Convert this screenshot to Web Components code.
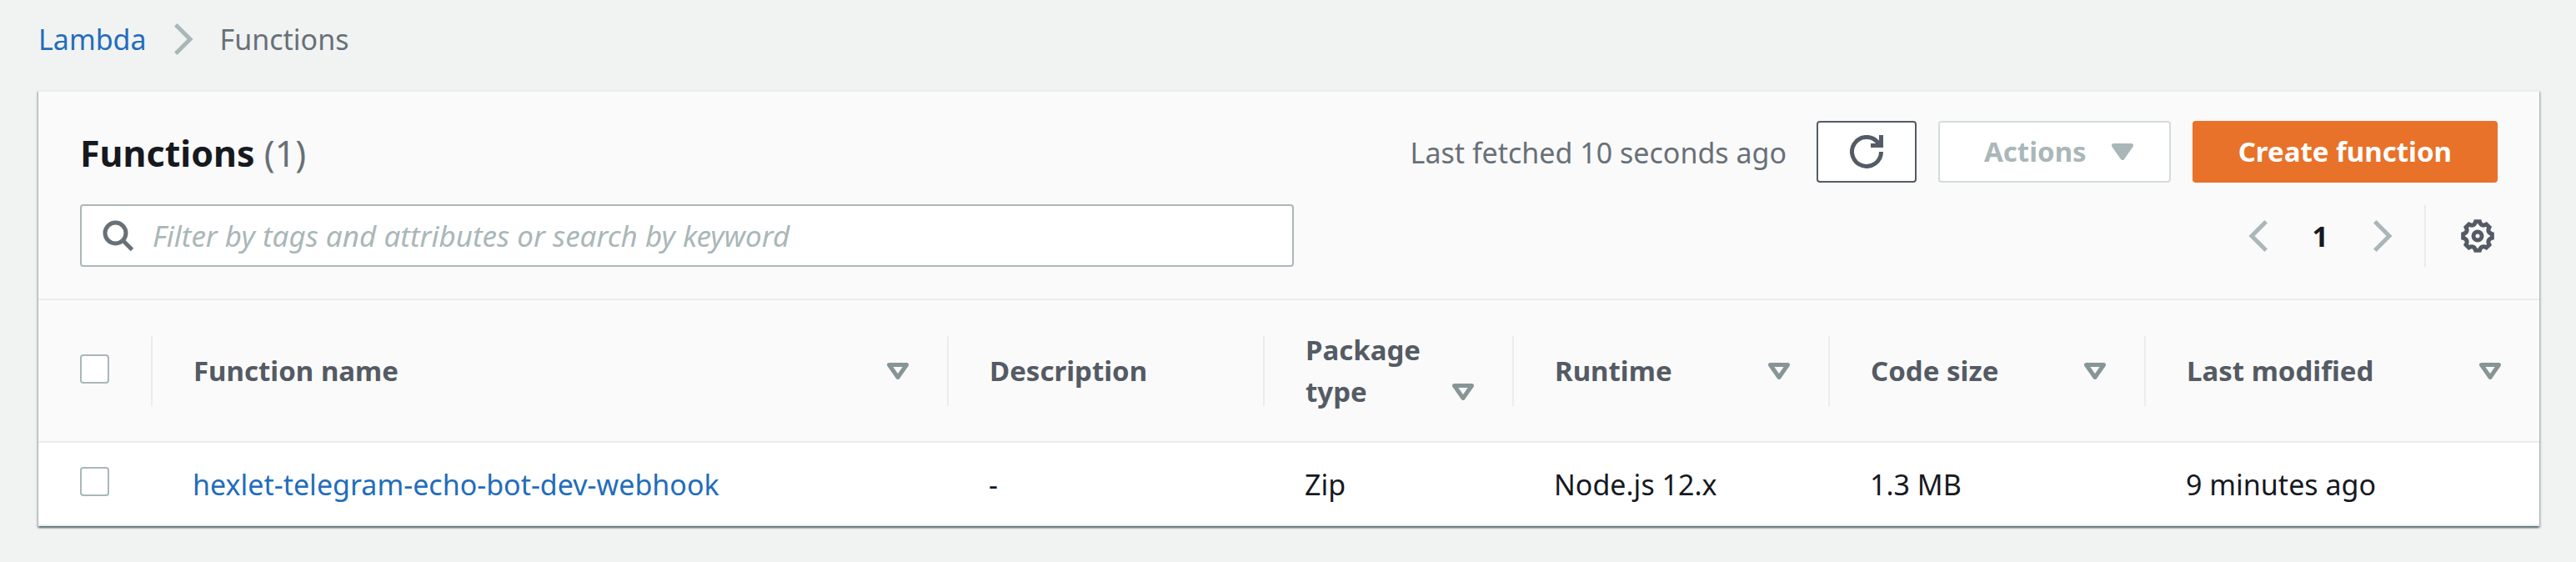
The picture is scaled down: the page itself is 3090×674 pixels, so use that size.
<!DOCTYPE html>
<html lang="en">
<head>
<meta charset="utf-8">
<title>Functions - Lambda</title>
<style>
  body {
    margin: 0;
    background: #f1f3f3;
    color: #16191f;
    font: 34px/50px "Noto Sans", "Open Sans", sans-serif;
  }
</style>
</head>
<body>
<lambda-page>
  <bread-crumbs slot="nav">
    <a href="#lambda">Lambda</a>
    <span>Functions</span>
  </bread-crumbs>
  <content-panel>
    <panel-title slot="title" count="1">Functions</panel-title>
    <span slot="status">Last fetched 10 seconds ago</span>
    <push-button slot="actions" kind="icon" icon="refresh" label="Refresh"></push-button>
    <push-button slot="actions" kind="menu" disabled>Actions</push-button>
    <push-button slot="actions" kind="primary">Create function</push-button>
    <search-field slot="filter" placeholder="Filter by tags and attributes or search by keyword"></search-field>
    <page-picker slot="paging" page="1"></page-picker>
    <functions-table></functions-table>
  </content-panel>
</lambda-page>

<script>
  class Base extends HTMLElement {
    connectedCallback() {
      if (!this.shadowRoot) this.attachShadow({ mode: 'open' }).innerHTML = this.render();
    }
  }

  // Closed outline of an eight-toothed cog centred on (8, 8).
  const cog = () => {
    const at = (r, deg) => {
      const a = deg * Math.PI / 180;
      return (8 + r * Math.sin(a)).toFixed(2) + ' ' + (8 - r * Math.cos(a)).toFixed(2);
    };
    let d = 'M' + at(7, -8);
    for (let k = 0; k < 8; k++) {
      d += 'L' + at(7, k * 45 + 8) + 'Q' + at(4.6, k * 45 + 22.5) + ' ' + at(7, k * 45 + 37);
    }
    return d + 'Z';
  };

  const ICONS = {
    refresh: [40, 40, '0 0 16 16', '<path d="M15 8a7 7 0 1 1-1.7-4.6L14.2 4.6M10 5h5M15 6V0" fill="none" stroke="currentColor" stroke-width="2"/>'],
    gear: [40, 40, '0 0 16 16', `<g fill="none" stroke="currentColor" stroke-width="2"><path d="${cog()}"/><circle cx="8" cy="8" r="2"/></g>`],
    search: [38, 38, '0 0 38 38', '<g fill="none" stroke="currentColor" stroke-width="5"><circle cx="15.5" cy="15.5" r="12.5"/><path d="M24 24 35.5 35.5"/></g>'],
    next: [24, 38, '0 0 24 38', '<path d="M2.8 1.8 20 19 2.8 36.2" fill="none" stroke="currentColor" stroke-width="5"/>'],
    prev: [24, 38, '0 0 24 38', '<path d="M21.2 1.8 4 19 21.2 36.2" fill="none" stroke="currentColor" stroke-width="5"/>'],
    caret: [26, 20, '0 0 26 20', '<path d="M2.5 2.5h21L13 17.5z" fill="currentColor" stroke="currentColor" stroke-width="5" stroke-linejoin="round"/>'],
    sort: [26, 20, '0 0 26 20', '<path d="M2.5 2.5h21L13 17.5z" fill="none" stroke="currentColor" stroke-width="5" stroke-linejoin="round"/>']
  };

  customElements.define('ui-icon', class extends Base {
    render() {
      const [w, h, box, body] = ICONS[this.getAttribute('name')];
      return `<style>:host{display:block;flex:none}svg{display:block}</style>
        <svg width="${w}" height="${h}" viewBox="${box}" aria-hidden="true">${body}</svg>`;
    }
  });

  customElements.define('lambda-page', class extends Base {
    render() {
      return `<style>
        :host{display:block;padding:22px 44px 40px 46px}
        header{padding-bottom:36px}
      </style>
      <header><slot name="nav"></slot></header>
      <main><slot></slot></main>`;
    }
  });

  customElements.define('bread-crumbs', class extends Base {
    render() {
      return `<style>
        :host{display:block;color:#687078}
        nav{display:flex;align-items:center;gap:32px}
        ui-icon{color:#aab7b8}
        ::slotted(a){color:#226dbb;text-decoration:none}
      </style>
      <nav aria-label="Breadcrumb"><slot name="root"></slot><ui-icon name="next"></ui-icon><slot></slot></nav>`;
    }
    connectedCallback() {
      this.querySelector('a').slot = 'root';
      super.connectedCallback();
    }
  });

  customElements.define('content-panel', class extends Base {
    render() {
      return `<style>
        :host{display:block;background:#fff;border-top:2px solid #eaeded;
          box-shadow:0 2px 2px 0 rgba(0,28,36,.5),2px 2px 2px 0 rgba(0,28,36,.15),-2px 2px 2px 0 rgba(0,28,36,.15)}
        header{display:flex;flex-direction:column;gap:26px;padding:35px 50px 38px;background:#fafafa;border-bottom:2px solid #eaeded}
        .row{display:flex;align-items:center;justify-content:space-between}
        .tools{display:flex;align-items:center;gap:26px}
        .status{color:#687078;padding:2px 10px 0 0}
        .filter{width:calc(50% + 6px)}
      </style>
      <header>
        <div class="row">
          <slot name="title"></slot>
          <div class="tools"><div class="status"><slot name="status"></slot></div><slot name="actions"></slot></div>
        </div>
        <div class="row">
          <div class="filter"><slot name="filter"></slot></div>
          <slot name="paging"></slot>
        </div>
      </header>
      <slot></slot>`;
    }
  });

  customElements.define('panel-title', class extends Base {
    render() {
      return `<style>
        :host{display:block}
        h1{margin:0;padding-top:4px;font-size:43px;line-height:50px;font-weight:700}
        span{font-weight:400;color:#687078}
      </style>
      <h1><slot></slot> <span>(${this.getAttribute('count')})</span></h1>`;
    }
  });

  customElements.define('push-button', class extends Base {
    render() {
      const kind = this.getAttribute('kind');
      const label = this.getAttribute('label');
      const icon = this.getAttribute('icon');
      return `<style>
        :host{display:block}
        button{display:flex;align-items:center;justify-content:center;gap:30px;box-sizing:border-box;height:74px;margin:0;
          padding:0 53px;border:2px solid;border-radius:4px;background:#fff;font:inherit;font-size:33px;font-weight:700;white-space:nowrap}
        .icon{color:#545b64;border-color:#545b64;padding:0 38px}
        .menu{color:#aab7b8;border-color:#d5dbdb;padding-right:43px}
        .primary{color:#fff;background:#e87229;border-color:#e87229}
      </style>
      <button type="button" class="${kind}"${label ? ` aria-label="${label}"` : ''}${kind === 'menu' ? ' aria-haspopup="menu"' : ''}${this.hasAttribute('disabled') ? ' disabled' : ''}>${
        icon ? `<ui-icon name="${icon}"></ui-icon>` : '<slot></slot>'}${kind === 'menu' ? '<ui-icon name="caret"></ui-icon>' : ''}</button>`;
    }
  });

  customElements.define('search-field', class extends Base {
    render() {
      const text = this.getAttribute('placeholder');
      return `<style>
        :host{display:block}
        label{display:flex;align-items:center;gap:22px;box-sizing:border-box;height:75px;padding:0 25px;
          background:#fff;border:2px solid #aab7b8;border-radius:4px}
        ui-icon{color:#687078}
        input{flex:1;min-width:0;padding:0;border:0;outline:0;background:none;color:#16191f;font:inherit}
        input::placeholder{color:#aab7b8;opacity:1;font-size:35px;font-style:italic}
      </style>
      <label><ui-icon name="search"></ui-icon><input type="text" aria-label="${text}" placeholder="${text}"></label>`;
    }
  });

  customElements.define('page-picker', class extends Base {
    render() {
      return `<style>
        :host{display:flex;align-items:center}
        nav{display:flex;align-items:center;gap:53px;padding-right:38px;border-right:2px solid #eaeded;height:74px}
        button{display:block;margin:0;padding:0;border:0;background:none;font:inherit;color:#aab7b8}
        .page{color:#16191f;font-weight:700}
        .gear{color:#545b64;margin:0 4px 0 42px}
      </style>
      <nav aria-label="Pages">
        <button type="button" aria-label="Previous page" disabled><ui-icon name="prev"></ui-icon></button>
        <button type="button" class="page" aria-current="page">${this.getAttribute('page')}</button>
        <button type="button" aria-label="Next page" disabled><ui-icon name="next"></ui-icon></button>
      </nav>
      <button type="button" class="gear" aria-label="Preferences"><ui-icon name="gear"></ui-icon></button>`;
    }
  });

  customElements.define('check-box', class extends Base {
    render() {
      return `<style>
        :host{display:block}
        input{appearance:none;display:block;box-sizing:border-box;width:35px;height:35px;margin:0;background:#fff;
          border:2px solid #aab7b8;border-radius:4px}
      </style>
      <input type="checkbox" aria-label="${this.getAttribute('label')}">`;
    }
  });

  const COLUMNS = [
    ['Function name', 'name', true],
    ['Description', 'description', false],
    ['Package type', 'package', true],
    ['Runtime', 'runtime', true],
    ['Code size', 'size', true],
    ['Last modified', 'modified', true]
  ];
  const ROWS = [
    { name: 'hexlet-telegram-echo-bot-dev-webhook', description: '-', package: 'Zip', runtime: 'Node.js 12.x', size: '1.3 MB', modified: '9 minutes ago' }
  ];

  customElements.define('functions-table', class extends Base {
    render() {
      const head = COLUMNS.map(([title, key, sortable]) => `<th scope="col">${sortable
        ? `<button type="button"><span>${title}</span><span class="arrow"><ui-icon name="sort"></ui-icon></span></button>`
        : title}</th>`).join('');
      const rows = ROWS.map(row => `<tr><td class="pick"><check-box label="Select ${row.name}"></check-box></td>${COLUMNS.map(([, key]) =>
        `<td>${key === 'name' ? `<a href="#${row.name}">${row[key]}</a>` : row[key]}</td>`).join('')}</tr>`).join('');
      return `<style>
        :host{display:block}
        table{width:100%;table-layout:fixed;border-collapse:separate;border-spacing:0;text-align:left}
        .c-pick{width:137px}
        .c-description,.c-runtime,.c-size{width:379px}
        .c-package{width:299px}
        .c-modified{width:472px}
        th,td{box-sizing:border-box;border-bottom:2px solid #eaeded;vertical-align:middle}
        th{height:171px;padding:0 48px 0 49px;background:#fafafa linear-gradient(#eaeded,#eaeded) no-repeat right center / 2px 84px;
          color:#545b64;font-size:33px;font-weight:700}
        th:last-child{background-image:none;padding-right:46px}
        td{height:100px;padding:2px 48px 0}
        .pick{padding:0 0 5px 50px}
        a{color:#226dbb;text-decoration:none}
        button{display:flex;align-items:flex-end;justify-content:space-between;width:100%;margin:0;padding:0;border:0;
          background:none;color:inherit;font:inherit;text-align:left}
        .arrow{display:flex;align-items:center;height:50px;color:#879596}
      </style>
      <table>
        <colgroup><col class="c-pick">${COLUMNS.map(c => `<col class="c-${c[1]}">`).join('')}</colgroup>
        <thead><tr><th scope="col" class="pick"><check-box label="Select all functions"></check-box></th>${head}</tr></thead>
        <tbody>${rows}</tbody>
      </table>`;
    }
  });
</script>
</body>
</html>
